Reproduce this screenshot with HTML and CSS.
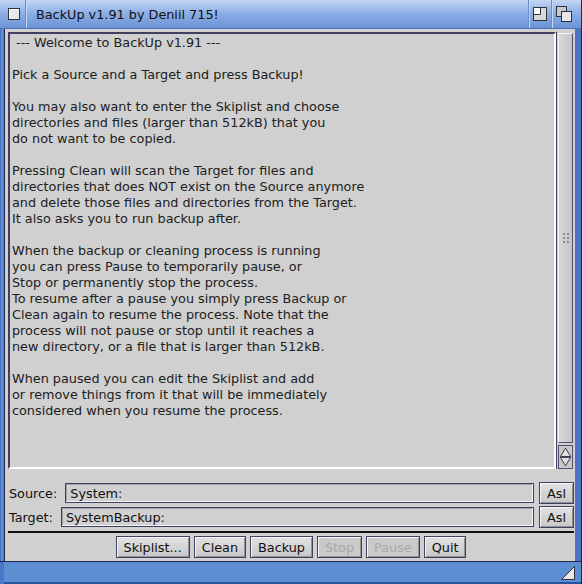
FILE: index.html
```html
<!DOCTYPE html>
<html lang="en">
<head>
    <meta charset="UTF-8">
    <title>BackUp v1.91</title>
    <link rel="stylesheet" href="styles.css">
</head>
<body>
    <div class="window">
        <div class="titlebar">
            <div class="gadget close"><span class="box"></span></div>
            <div class="title">BackUp v1.91 by Deniil 715!</div>
            <div class="gadget zoom">
                <svg width="16" height="16" viewBox="0 0 16 16">
                    <rect x="1.5" y="1.5" width="13" height="13" fill="#d8d8d8" stroke="#303040"/>
                    <rect x="2" y="2" width="6" height="6" fill="#fff"/>
                    <path d="M8.5 2 V8.5 H2" fill="none" stroke="#303040"/>
                </svg>
            </div>
            <div class="gadget depth">
                <svg width="18" height="18" viewBox="0 0 18 18">
                    <rect x="1.5" y="1.5" width="10" height="10" fill="#c8c8c8" stroke="#303040"/>
                    <rect x="6.5" y="6.5" width="10" height="10" fill="#e8e8e8" stroke="#303040"/>
                </svg>
            </div>
        </div>
        <div class="middle">
            <div class="content">
                <div class="listrow">
                    <div class="listview">
<pre> --- Welcome to BackUp v1.91 ---

Pick a Source and a Target and press Backup!

You may also want to enter the Skiplist and choose
directories and files (larger than 512kB) that you
do not want to be copied.

Pressing Clean will scan the Target for files and
directories that does NOT exist on the Source anymore
and delete those files and directories from the Target.
It also asks you to run backup after.

When the backup or cleaning process is running
you can press Pause to temporarily pause, or
Stop or permanently stop the process.
To resume after a pause you simply press Backup or
Clean again to resume the process. Note that the
process will not pause or stop until it reaches a
new directory, or a file that is larger than 512kB.

When paused you can edit the Skiplist and add
or remove things from it that will be immediately
considered when you resume the process.</pre>
                    </div>
                    <div class="scroller">
                        <div class="knob"><span class="grip"></span></div>
                        <div class="arrows">
                            <svg width="14" height="22" viewBox="0 0 14 22">
                                <path d="M7 1.5 L12.5 10.5 H1.5 Z" fill="#e0e0e0" stroke="#303040"/>
                                <path d="M7 20.5 L12.5 11.5 H1.5 Z" fill="#e0e0e0" stroke="#303040"/>
                            </svg>
                        </div>
                    </div>
                </div>
                <div class="field-row source">
                    <span class="label">Source:</span>
                    <div class="field">System:</div>
                    <button class="btn asl">Asl</button>
                </div>
                <div class="field-row target">
                    <span class="label">Target:</span>
                    <div class="field">SystemBackup:</div>
                    <button class="btn asl">Asl</button>
                </div>
                <div class="buttons">
                    <button class="btn">Skiplist...</button>
                    <button class="btn">Clean</button>
                    <button class="btn">Backup</button>
                    <button class="btn off">Stop</button>
                    <button class="btn off">Pause</button>
                    <button class="btn">Quit</button>
                </div>
            </div>
        </div>
        <div class="bottombar">
            <svg class="sizer" width="16" height="16" viewBox="0 0 16 16">
                <path d="M14.5 1.5 V14.5 H1.5 Z" fill="#e8e8e8" stroke="#303040"/>
            </svg>
        </div>
    </div>
</body>
</html>
```

FILE: styles.css
```css
body {
    margin: 0;
    font-family: "DejaVu Sans", sans-serif;
    font-size: 12.8px;
    color: #101010;
    background: #5a85cc;
}
.window {
    width: 582px;
    height: 584px;
    display: flex;
    flex-direction: column;
    box-sizing: border-box;
    border-right: 1px solid #202a50;
}
.titlebar {
    height: 29px;
    display: flex;
    align-items: center;
    padding-right: 6px;
    background: linear-gradient(#c4d6f4, #8fb0e6 45%, #6a93d6);
    border-bottom: 1px solid #5070b0;
    box-sizing: border-box;
}
.gadget {
    height: 28px;
    display: flex;
    align-items: center;
    justify-content: center;
}
.close {
    width: 25px;
    border-right: 1px solid #6a8cc8;
    box-shadow: 1px 0 0 #c8d8f4;
}
.close .box {
    width: 10px;
    height: 10px;
    margin-left: 2px;
    background: #e8e8e8;
    border: 1px solid #303040;
    box-shadow: inset 1px 1px 0 #fff;
}
.title {
    flex: 1;
    padding-left: 10px;
    color: #101010;
}
.zoom, .depth {
    width: 22px;
    border-left: 1px solid #6a8cc8;
    box-shadow: inset 1px 0 0 #c8d8f4;
}
.depth {
    width: 23px;
}
.middle {
    flex: 1;
    display: flex;
    padding: 0 6px 0 4px;
    background: linear-gradient(90deg, #3a64b8 0, #6a98dc 2px, #4a74c4 4px);
    background-repeat: no-repeat;
    background-color: #3060b8;
}
.content {
    flex: 1;
    background: #d0d0d0;
    border-left: 1px solid #20284a;
    padding: 3px 1px 3px 3px;
    display: flex;
    flex-direction: column;
}
.listrow {
    height: 437px;
    display: flex;
}
.listview {
    flex: 1;
    border: 2px solid #404060;
    border-right-color: #ffffff;
    border-bottom-color: #ffffff;
    background: #d0d0d0;
    overflow: hidden;
}
.listview pre {
    margin: 0;
    padding: 1px 0 0 2px;
    font-family: "DejaVu Sans", sans-serif;
    font-size: 12.8px;
    line-height: 16px;
    color: #202020;
}
.scroller {
    width: 17px;
    display: flex;
    flex-direction: column;
    border-left: 1px solid #404060;
}
.knob {
    flex: 1;
    margin: 1px 1px 2px 1px;
    background: linear-gradient(90deg, #d8d8d8, #c4c4c4);
    border: 1px solid #505070;
    border-top-color: #f0f0f0;
    border-left-color: #f0f0f0;
    display: flex;
    align-items: center;
    justify-content: center;
}
.grip {
    width: 8px;
    height: 12px;
    background-image: radial-gradient(circle, #8a8a9a 0.8px, transparent 1.2px);
    background-size: 4px 4px;
}
.arrows {
    height: 22px;
    display: flex;
    justify-content: center;
    border: 1px solid #505070;
    margin: 0 1px 0 1px;
    background: #c8c8c8;
}
.field-row {
    display: flex;
    align-items: center;
    height: 22px;
}
.source {
    margin-top: 13px;
}
.target {
    margin-top: 2px;
}
.label {
    padding: 0 8px 0 1px;
}
.field {
    flex: 1;
    height: 20px;
    box-sizing: border-box;
    border: 1px solid #404060;
    box-shadow: inset -1px -1px 0 #f4f4f4, inset 1px 1px 0 #a0a0a8;
    background: #d0d0d0;
    padding: 2px 4px;
    line-height: 15px;
    margin-right: 5px;
}
.btn {
    font-family: "DejaVu Sans", sans-serif;
    font-size: 12.8px;
    color: #101010;
    height: 22px;
    padding: 0 7px;
    background: linear-gradient(#e2e2e2, #c8c8c8);
    border: 1px solid #404060;
    box-shadow: inset 1px 1px 0 #f8f8f8, inset -1px -1px 0 #909098;
    margin: 0;
}
.asl {
    width: 35px;
    padding: 0;
}
.buttons {
    display: flex;
    justify-content: center;
    gap: 4px;
    border-top: 2px solid #101010;
    margin-top: 3px;
    padding-top: 3px;
}
.btn.off {
    color: #a8a8a8;
    background: #cacaca;
}
.bottombar {
    height: 23px;
    box-sizing: border-box;
    background: #5e8ed2;
    border-top: 1px solid #20284a;
    box-shadow: inset 4px 0 0 #4a78c8, inset 0 -2px 0 #2a50a0;
    display: flex;
    justify-content: flex-end;
    align-items: center;
    padding-right: 5px;
}
```
